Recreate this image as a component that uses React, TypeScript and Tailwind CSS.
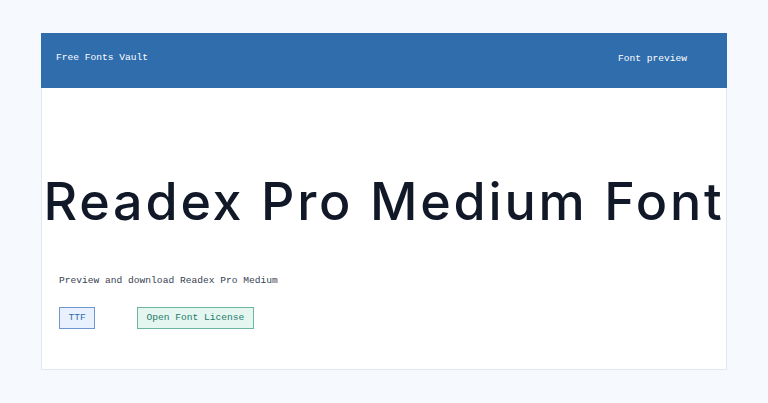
const mono = "font-['Liberation_Mono','DejaVu_Sans_Mono',monospace]"

export default function App() {
  return (
    <div className="min-h-[403px] bg-[#f6f9fe] px-[41px] pt-[33px]">
      <div className="border border-[#e2e8f0] bg-white h-[337px] flex flex-col">
        {/* top bar */}
        <header className={`flex items-center justify-between h-[55px] -mx-px -mt-px bg-[#2f6dad] pl-[15px] pr-[40px] text-white text-[9.6px] ${mono}`}>
          <span className="-mt-[4px]">Free Fonts Vault</span>
          <span className="-mt-[2px]">Font preview</span>
        </header>

        <main className="flex-1 flex flex-col px-[17px]">
          <h1 className="mt-[84px] text-center whitespace-nowrap text-[#111827] text-[52px] leading-[60px] font-medium tracking-[2.8px] font-['Inter','Lato',sans-serif] -mx-[17px]">
            Readex Pro Medium Font
          </h1>
          <p className={`mt-[42px] text-[9.6px] text-[#374151] ${mono}`}>
            Preview and download Readex Pro Medium
          </p>
          <div className={`mt-[19px] flex gap-[42px] text-[9.6px] ${mono}`}>
            <span className="h-[22px] flex items-center px-[8.4px] border border-[#6e98cf] bg-[#e8f1fd] text-[#2f6dad]">
              TTF
            </span>
            <span className="h-[22px] flex items-center px-[8.4px] border border-[#6cb5a2] bg-[#e5f6f1] text-[#1d7a68]">
              Open Font License
            </span>
          </div>
        </main>
      </div>
    </div>
  )
}
